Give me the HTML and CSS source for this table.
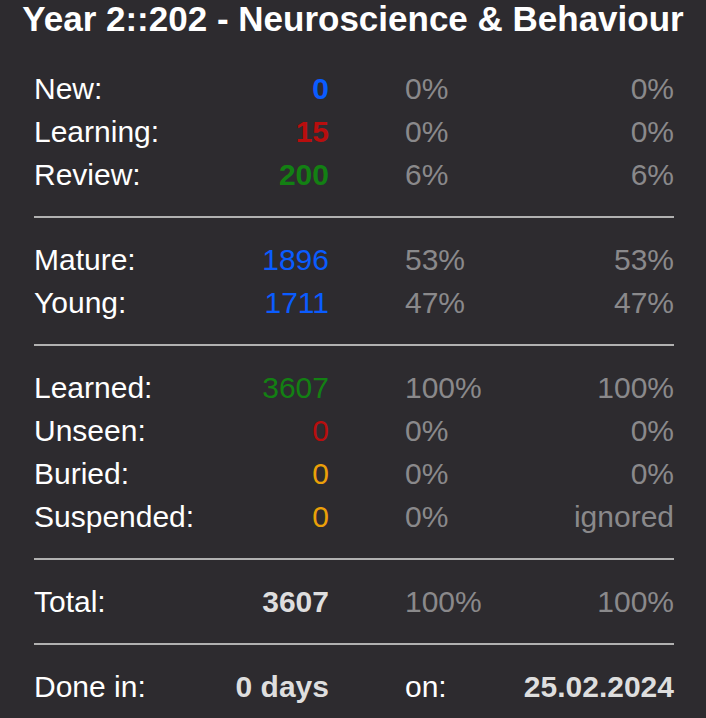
FILE: index.html
```html
<!DOCTYPE html>
<html>
<head>
<meta charset="utf-8">
<link rel="stylesheet" href="styles.css">
</head>
<body>
<h1 class="title">Year 2::202 - Neuroscience &amp; Behaviour</h1>
<div class="stats">
  <div class="section first">
    <div class="row"><span class="label">New:</span><span class="num blue bold">0</span><span class="pct">0%</span><span class="pct2">0%</span></div>
    <div class="row"><span class="label">Learning:</span><span class="num red bold">15</span><span class="pct">0%</span><span class="pct2">0%</span></div>
    <div class="row"><span class="label">Review:</span><span class="num green bold">200</span><span class="pct">6%</span><span class="pct2">6%</span></div>
  </div>
  <div class="section">
    <div class="row"><span class="label">Mature:</span><span class="num blue">1896</span><span class="pct">53%</span><span class="pct2">53%</span></div>
    <div class="row"><span class="label">Young:</span><span class="num blue">1711</span><span class="pct">47%</span><span class="pct2">47%</span></div>
  </div>
  <div class="section">
    <div class="row"><span class="label">Learned:</span><span class="num green">3607</span><span class="pct">100%</span><span class="pct2">100%</span></div>
    <div class="row"><span class="label">Unseen:</span><span class="num red">0</span><span class="pct">0%</span><span class="pct2">0%</span></div>
    <div class="row"><span class="label">Buried:</span><span class="num orange">0</span><span class="pct">0%</span><span class="pct2">0%</span></div>
    <div class="row"><span class="label">Suspended:</span><span class="num orange">0</span><span class="pct">0%</span><span class="pct2">ignored</span></div>
  </div>
  <div class="section">
    <div class="row"><span class="label">Total:</span><span class="num strong">3607</span><span class="pct">100%</span><span class="pct2">100%</span></div>
  </div>
  <div class="section">
    <div class="row"><span class="label">Done in:</span><span class="num strong">0 days</span><span class="on">on:</span><span class="pct2 strong">25.02.2024</span></div>
  </div>
</div>
</body>
</html>
```
FILE: styles.css
```css
html, body {
  margin: 0;
  padding: 0;
  background: #2d2b2f;
}
body {
  font-family: "Liberation Sans", Arial, Helvetica, sans-serif;
  color: #ffffff;
  width: 706px;
  height: 718px;
  overflow: hidden;
}
.title {
  margin: 0;
  padding-top: 1px;
  font-size: 35px;
  font-weight: bold;
  line-height: 36px;
  text-align: center;
  color: #ffffff;
}
.stats {
  margin: 11px 32px 0 34px;
  width: 640px;
}
.section {
  border-top: 2px solid #b1b1b1;
  padding: 20.5px 0 19.5px;
}
.section.first {
  border-top: none;
  padding-top: 19px;
}
.row {
  display: grid;
  grid-template-columns: 160px 135px 1fr 1fr;
  font-size: 30px;
  line-height: 43px;
  white-space: nowrap;
}
.label { color: #ffffff; }
.num { text-align: right; }
.pct { color: #8a898b; padding-left: 76px; }
.on { color: #ffffff; padding-left: 76px; }
.pct2 { color: #8a898b; text-align: right; }
.bold { font-weight: bold; }
.strong { font-weight: bold; color: #dedede; }
.blue { color: #0a5cff; }
.red { color: #b80e0e; }
.green { color: #138013; }
.orange { color: #eba008; }
```
